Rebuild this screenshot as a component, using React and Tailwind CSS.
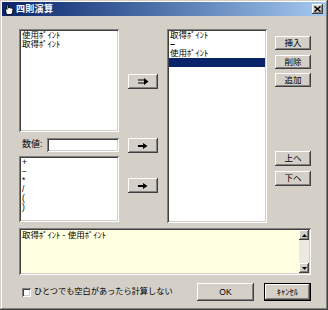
import React from "react";

const raised =
  "shadow-[inset_-1px_-1px_#404040,inset_1px_1px_#ffffff,inset_-2px_-2px_#808080,inset_2px_2px_#d4d0c8]";
const sunken =
  "shadow-[inset_1px_1px_#808080,inset_-1px_-1px_#ffffff,inset_2px_2px_#404040,inset_-2px_-2px_#d4d0c8]";

function Btn({ children, className = "" }) {
  return (
    <div
      className={`flex items-center justify-center bg-[#d4d0c8] ${raised} ${className}`}
    >
      {children}
    </div>
  );
}

function ListBox({ items, selected, className = "" }) {
  return (
    <div className={`bg-white p-[2px] ${sunken} ${className}`}>
      {items.map((t, i) => (
        <div
          key={i}
          className="h-[9px] leading-[9px] pl-[1px] whitespace-nowrap overflow-hidden"
        >
          {t}
        </div>
      ))}
      {selected && <div className="h-[9px] bg-[#0a246a]" />}
    </div>
  );
}

function TitleIcon() {
  return (
    <svg width="10" height="11" viewBox="0 0 10 11">
      <path
        d="M2.5 10.5 L1.5 6 Q1 4.5 2.5 4.5 L3 5.5 L3 1.5 Q3.5 0.5 4.5 1.5 L4.5 4 Q5.5 3.2 6.3 4 Q7.3 3.4 8 4.5 Q9 4.4 9 5.6 L8.5 8.5 L7.5 10.5 Z"
        fill="#ffffff"
        stroke="#000000"
        strokeWidth="0.9"
      />
    </svg>
  );
}

function DoubleArrow() {
  return (
    <svg width="11" height="7" viewBox="0 0 11 7">
      <path d="M0 2 H7 M0 5 H7" stroke="#000" strokeWidth="1.2" />
      <path d="M6 0 L10.5 3.5 L6 7 Z" fill="#000" />
    </svg>
  );
}

function Arrow() {
  return (
    <svg width="10" height="6" viewBox="0 0 10 6">
      <path d="M0 3 H6" stroke="#000" strokeWidth="2" />
      <path d="M5 0 L9.5 3 L5 6 Z" fill="#000" />
    </svg>
  );
}

export default function App() {
  return (
    <div className="w-[328px] h-[310px] bg-[#d4d0c8] p-[2px] shadow-[inset_-1px_-1px_#404040,inset_1px_1px_#d4d0c8,inset_-2px_-2px_#808080,inset_2px_2px_#ffffff] font-['Liberation_Sans','Noto_Sans_CJK_JP',sans-serif] text-[8.5px] text-black overflow-hidden flex flex-col">
      {/* title bar */}
      <div className="h-[14px] shrink-0 flex items-center bg-gradient-to-r from-[#0a246a] to-[#a6caf0] pl-[2px] pr-[3px]">
        <TitleIcon />
        <span className="ml-[2px] text-white font-bold text-[9px] leading-[14px] tracking-[0.3px]">
          四則演算
        </span>
        <div
          className={`ml-auto w-[11px] h-[10px] flex items-center justify-center bg-[#d4d0c8] ${raised}`}
        >
          <svg width="7" height="6" viewBox="0 0 7 6">
            <path d="M0.5 0.5 L6.5 5.5 M6.5 0.5 L0.5 5.5" stroke="#000" strokeWidth="1.6" />
          </svg>
        </div>
      </div>

      {/* main area */}
      <div className="flex mt-[13px] ml-[17px]">
        {/* left column */}
        <div className="w-[100px] flex flex-col">
          <ListBox items={["使用ﾎﾟｲﾝﾄ", "取得ﾎﾟｲﾝﾄ"]} className="h-[103px]" />
          <div className="mt-[6px] h-[14px] flex items-center">
            <span className="w-[28px] pl-[3px] text-[9px]">数値:</span>
            <div className={`w-[73px] h-[14px] bg-white ${sunken}`} />
          </div>
          <ListBox
            items={["+", "−", "*", "/", "(", ")"]}
            className="mt-[4px] h-[66px]"
          />
        </div>

        {/* middle buttons */}
        <div className="ml-[9px] w-[30px] flex flex-col">
          <Btn className="mt-[45px] h-[15px]">
            <DoubleArrow />
          </Btn>
          <Btn className="mt-[49px] h-[15px]">
            <Arrow />
          </Btn>
          <Btn className="mt-[25px] h-[15px]">
            <Arrow />
          </Btn>
        </div>

        {/* right list */}
        <ListBox
          items={[
            "取得ﾎﾟｲﾝﾄ",
            <span key="m" className="font-bold text-[9px]">–</span>,
            "使用ﾎﾟｲﾝﾄ",
          ]}
          selected
          className="ml-[9px] w-[100px] h-[194px]"
        />

        {/* right buttons */}
        <div className="ml-[8px] w-[36px] flex flex-col">
          <Btn className="mt-[7px] h-[14px]">挿入</Btn>
          <Btn className="mt-[5px] h-[14px]">削除</Btn>
          <Btn className="mt-[4px] h-[14px]">追加</Btn>
          <Btn className="mt-[64px] h-[15px]">上へ</Btn>
          <Btn className="mt-[5px] h-[15px]">下へ</Btn>
        </div>
      </div>

      {/* expression textarea */}
      <div
        className={`mt-[5px] ml-[17px] w-[292px] h-[47px] bg-[#ffffe1] p-[2px] flex ${sunken}`}
      >
        <div className="flex-1 pl-[1px] pt-[1px] leading-[9px] whitespace-nowrap">
          取得ﾎﾟｲﾝﾄ - 使用ﾎﾟｲﾝﾄ
        </div>
        <div className="w-[10px] flex flex-col bg-[#ece9e2]">
          <Btn className="h-[10px]">
            <svg width="5" height="3" viewBox="0 0 5 3">
              <path d="M0 3 L2.5 0 L5 3 Z" fill="#000" />
            </svg>
          </Btn>
          <div className="flex-1" />
          <Btn className="h-[10px]">
            <svg width="5" height="3" viewBox="0 0 5 3">
              <path d="M0 0 L2.5 3 L5 0 Z" fill="#000" />
            </svg>
          </Btn>
        </div>
      </div>

      {/* bottom row */}
      <div className="mt-[8px] h-[18px] flex items-center">
        <div className={`ml-[20px] w-[9px] h-[9px] bg-white ${sunken}`} />
        <span className="ml-[3px] whitespace-nowrap text-[8.2px]">ひとつでも空白があったら計算しない</span>
        <Btn className="ml-auto w-[57px] h-[18px]">OK</Btn>
        <div className="ml-[10px] mr-[15px] w-[47px] h-[18px] border border-black flex">
          <Btn className="flex-1">ｷｬﾝｾﾙ</Btn>
        </div>
      </div>
    </div>
  );
}
